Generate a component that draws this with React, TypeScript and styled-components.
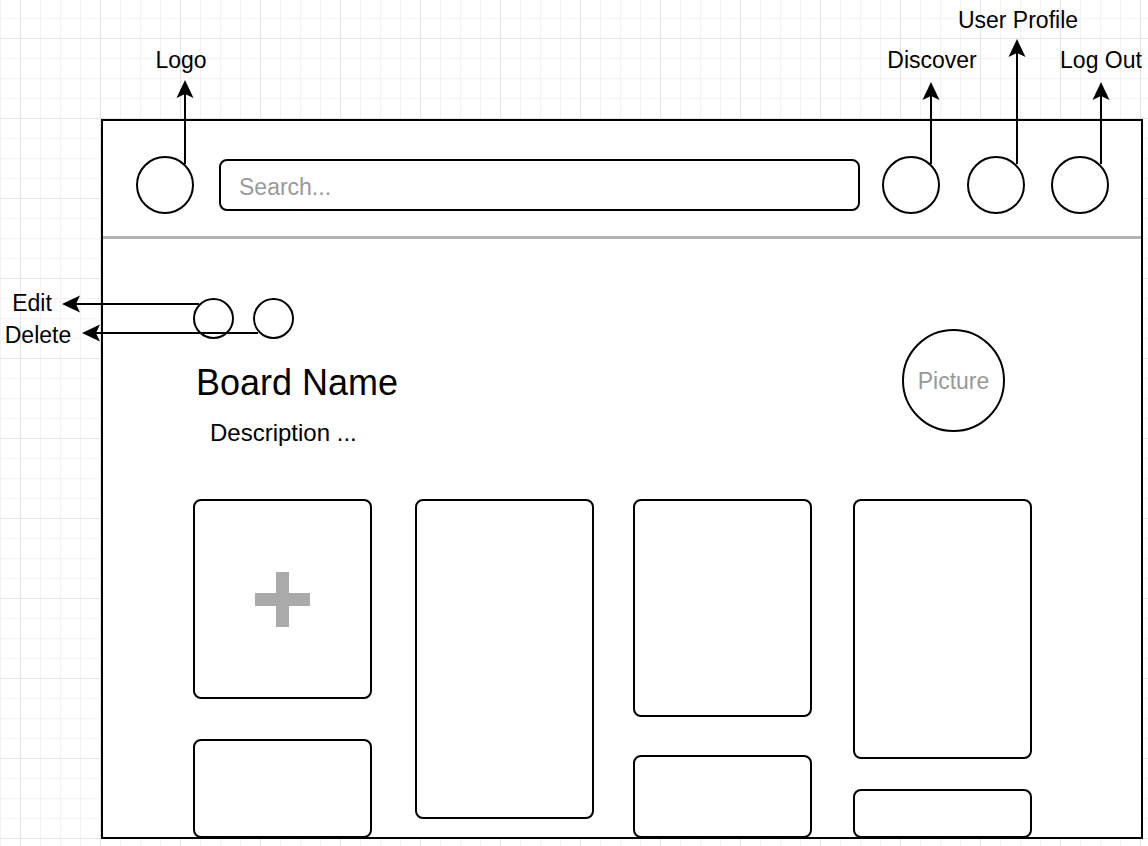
import React from "react";
import styled, { createGlobalStyle } from "styled-components";

const GlobalStyle = createGlobalStyle`
  *, *::before, *::after { box-sizing: border-box; }
  html, body { margin: 0; padding: 0; background: #fff; }
  body {
    font-family: "Liberation Sans", Arial, Helvetica, sans-serif;
    color: #000;
  }
`;

const Canvas = styled.div`
  position: relative;
  width: 1148px;
  height: 846px;
  overflow: hidden;
  padding: 119px 0 0 101px;
  background-color: #fff;
  background-image:
    linear-gradient(to right, #e3e3e3 1px, transparent 1px),
    linear-gradient(to bottom, #e3e3e3 1px, transparent 1px),
    linear-gradient(to right, #f3f3f3 1px, transparent 1px),
    linear-gradient(to bottom, #f3f3f3 1px, transparent 1px);
  background-size: 80px 80px, 80px 80px, 20px 20px, 20px 20px;
  background-position: 20px 0, 0 38px, 0 0, 0 18px;
`;

const Frame = styled.div`
  width: 1042px;
  height: 720px;
  border: 2px solid #000;
  background: #fff;
  display: flex;
  flex-direction: column;
`;

const Header = styled.header`
  flex: none;
  height: 118px;
  display: flex;
  align-items: center;
  padding: 12px 32px 0 33px;
  border-bottom: 3px solid #b3b3b3;
`;

const Circle = styled.div<{ $size: number; $ml?: number }>`
  flex: none;
  width: ${(p) => p.$size}px;
  height: ${(p) => p.$size}px;
  margin-left: ${(p) => p.$ml ?? 0}px;
  border: 2px solid #000;
  border-radius: 50%;
  background: #fff;
`;

const Search = styled.div`
  flex: 1;
  height: 52px;
  margin-left: 25px;
  border: 2px solid #000;
  border-radius: 8px;
  display: flex;
  align-items: center;
  padding: 5px 0 0 18px;
  font-size: 23px;
  line-height: 1;
  color: #999;
`;

const Body = styled.main`
  flex: 1;
  display: flex;
  flex-direction: column;
  padding-left: 90px;
`;

const BoardRow = styled.section`
  flex: none;
  height: 260px;
  display: flex;
  justify-content: space-between;
  align-items: flex-start;
  padding-right: 136px;
`;

const Info = styled.div`
  display: flex;
  flex-direction: column;
  align-items: flex-start;
`;

const Actions = styled.div`
  display: flex;
  gap: 19px;
  margin-top: 59px;
`;

const Title = styled.h1`
  margin: 26px 0 0 3px;
  font-size: 36px;
  line-height: 1;
  font-weight: normal;
`;

const Description = styled.p`
  margin: 20px 0 0 17px;
  font-size: 24px;
  line-height: 1;
`;

const Picture = styled.div`
  flex: none;
  width: 103px;
  height: 103px;
  margin-top: 90px;
  border: 2px solid #000;
  border-radius: 50%;
  display: flex;
  align-items: center;
  justify-content: center;
  padding-top: 2px;
  font-size: 23px;
  line-height: 1;
  color: #999;
`;

const Cards = styled.div`
  display: flex;
  align-items: flex-start;
`;

const Column = styled.div<{ $ml?: number }>`
  flex: none;
  width: 179px;
  margin-left: ${(p) => p.$ml ?? 0}px;
  display: flex;
  flex-direction: column;
`;

const Card = styled.div<{ $h: number; $mt?: number }>`
  height: ${(p) => p.$h}px;
  margin-top: ${(p) => p.$mt ?? 0}px;
  border: 2px solid #000;
  border-radius: 8px;
  background: #fff;
  display: flex;
  align-items: center;
  justify-content: center;
`;

const Plus = styled.div`
  position: relative;
  width: 55px;
  height: 55px;
  &::before,
  &::after {
    content: "";
    position: absolute;
    background: #aaa;
  }
  &::before {
    left: 21px;
    top: 0;
    width: 13px;
    height: 55px;
  }
  &::after {
    left: 0;
    top: 21px;
    width: 55px;
    height: 13px;
  }
`;

const Overlay = styled.svg`
  position: absolute;
  left: 0;
  top: 0;
  pointer-events: none;
`;

const Annotation = styled.span<{ $x: number; $y: number }>`
  position: absolute;
  left: ${(p) => p.$x}px;
  top: ${(p) => p.$y}px;
  transform: translate(-50%, -50%);
  font-size: 23px;
  line-height: 1;
  white-space: nowrap;
`;

type Arrow = { dir: "up" | "left"; from: number; to: number; at: number };

const arrows: Arrow[] = [
  { dir: "up", at: 185, from: 164, to: 80 },
  { dir: "up", at: 931, from: 164, to: 82 },
  { dir: "up", at: 1017, from: 164, to: 39 },
  { dir: "up", at: 1101, from: 164, to: 82 },
  { dir: "left", at: 304, from: 199, to: 62 },
  { dir: "left", at: 333, from: 258, to: 82 },
];

function ArrowShape({ a }: { a: Arrow }) {
  if (a.dir === "up") {
    const x = a.at;
    const t = a.to;
    return (
      <g>
        <line x1={x} y1={a.from} x2={x} y2={t + 12} stroke="#000" strokeWidth={2} />
        <path d={`M${x} ${t} L${x + 8.5} ${t + 18} L${x} ${t + 14} L${x - 8.5} ${t + 18} Z`} fill="#000" />
      </g>
    );
  }
  const y = a.at;
  const t = a.to;
  return (
    <g>
      <line x1={a.from} y1={y} x2={t + 12} y2={y} stroke="#000" strokeWidth={2} />
      <path d={`M${t} ${y} L${t + 18} ${y - 8.5} L${t + 14} ${y} L${t + 18} ${y + 8.5} Z`} fill="#000" />
    </g>
  );
}

export default function App() {
  return (
    <>
      <GlobalStyle />
      <Canvas>
        <Frame>
          <Header>
            <Circle $size={58} />
            <Search>Search...</Search>
            <Circle $size={58} $ml={22} />
            <Circle $size={58} $ml={27} />
            <Circle $size={58} $ml={26} />
          </Header>
          <Body>
            <BoardRow>
              <Info>
                <Actions>
                  <Circle $size={41} />
                  <Circle $size={41} />
                </Actions>
                <Title>Board Name</Title>
                <Description>Description ...</Description>
              </Info>
              <Picture>Picture</Picture>
            </BoardRow>
            <Cards>
              <Column>
                <Card $h={200}>
                  <Plus />
                </Card>
                <Card $h={99} $mt={40} />
              </Column>
              <Column $ml={43}>
                <Card $h={320} />
              </Column>
              <Column $ml={39}>
                <Card $h={218} />
                <Card $h={83} $mt={38} />
              </Column>
              <Column $ml={41}>
                <Card $h={260} />
                <Card $h={49} $mt={30} />
              </Column>
            </Cards>
          </Body>
        </Frame>
        <Overlay width={1148} height={846} viewBox="0 0 1148 846">
          {arrows.map((a, i) => (
            <ArrowShape key={i} a={a} />
          ))}
        </Overlay>
        <Annotation $x={181} $y={60}>Logo</Annotation>
        <Annotation $x={932} $y={60}>Discover</Annotation>
        <Annotation $x={1018} $y={20}>User Profile</Annotation>
        <Annotation $x={1101} $y={60}>Log Out</Annotation>
        <Annotation $x={32} $y={303}>Edit</Annotation>
        <Annotation $x={38} $y={335}>Delete</Annotation>
      </Canvas>
    </>
  );
}
